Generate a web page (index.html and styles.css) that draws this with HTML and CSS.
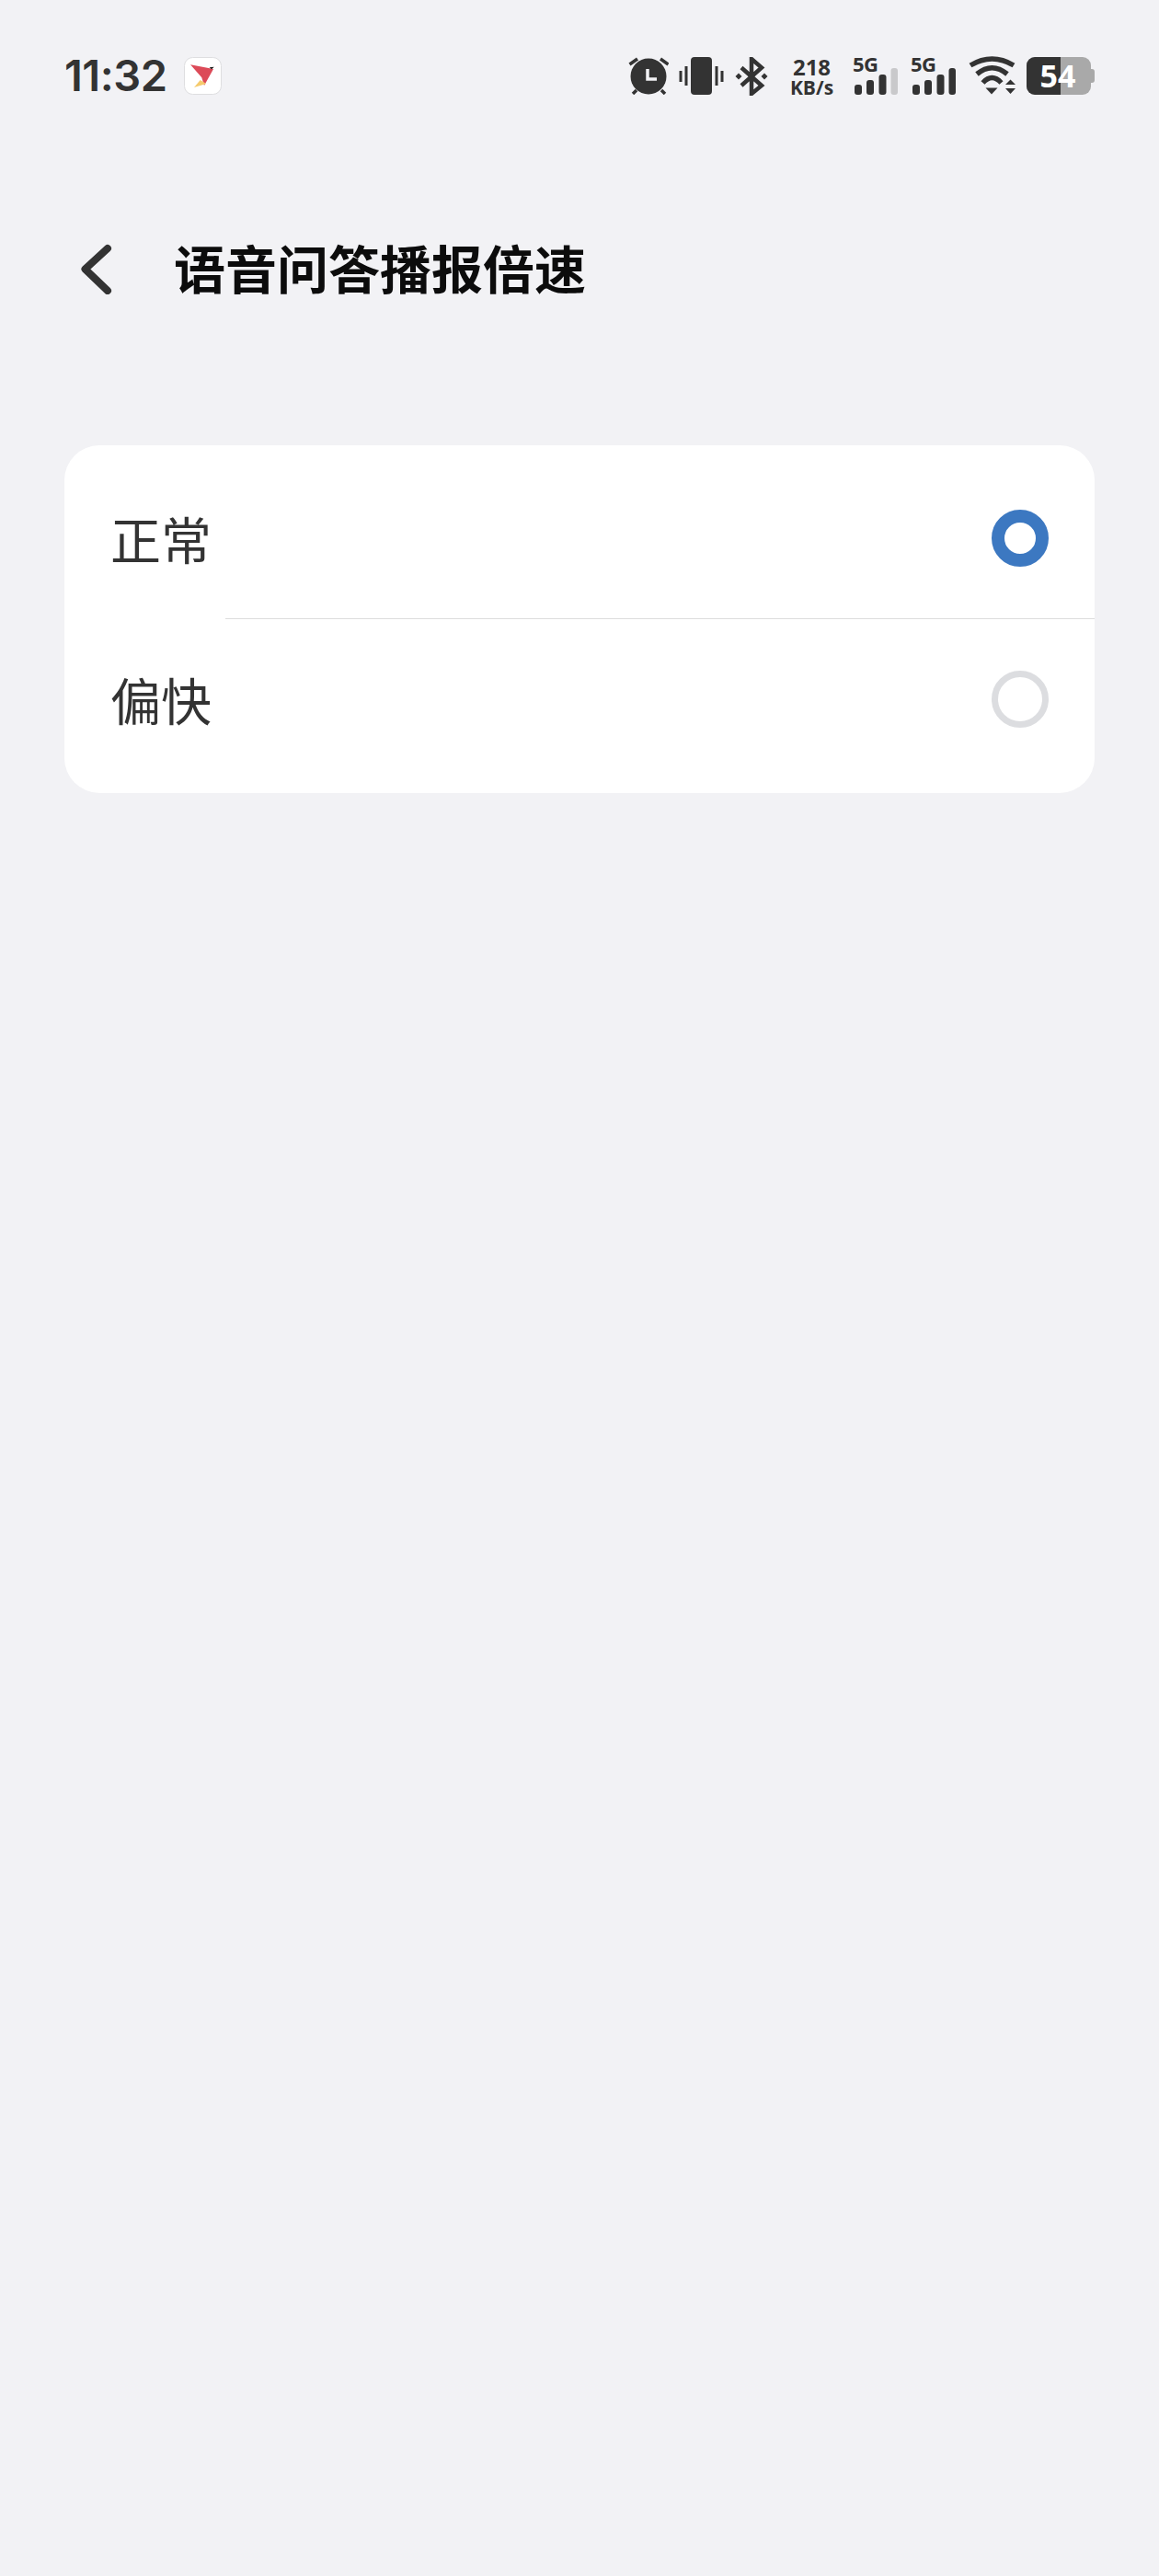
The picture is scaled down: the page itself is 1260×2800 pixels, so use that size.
FILE: index.html
```html
<!DOCTYPE html>
<html lang="zh-CN">
<head>
<meta charset="utf-8">
<title>语音问答播报倍速</title>
<link rel="stylesheet" href="styles.css">
</head>
<body>
<div class="page">
  <div class="status">
    <div class="status-left">
      <span class="time">11:32</span>
      <svg class="app-icon" viewBox="0 0 41 41">
        <rect x="0.500" y="0.500" width="40" height="40" rx="9" fill="#fff" stroke="#dedee0"/>
        <polygon points="7,8.300 32,13 22,31 19.300,22.300" fill="#dc4a58"/>
        <polygon points="11,33 17.700,25 24.300,29" fill="#f5cb6e"/>
        <polygon points="27.700,11.300 32.700,10.700 30,13.300" fill="#111"/>
      </svg>
    </div>
    <div class="status-right">
      <svg class="ic-alarm" viewBox="0 0 44 41">
        <circle cx="22" cy="21" r="19.500" fill="#333"/>
        <path d="M1.500 8 10 2M35 2l8.500 6M5 40l4-4M40 40l-4-4" stroke="#333" stroke-width="3.500" fill="none"/>
        <path d="M21 13v11h10" stroke="#f2f2f5" stroke-width="3.500" fill="none"/>
      </svg>
      <svg class="ic-vibrate" viewBox="0 0 49 41">
        <rect x="13" y="0" width="23" height="41" rx="4" fill="#333"/>
        <rect x="6.500" y="10" width="3" height="21" fill="#333"/>
        <rect x="0.500" y="15" width="3" height="12" fill="#333"/>
        <rect x="39.500" y="10" width="3" height="21" fill="#333"/>
        <rect x="45.500" y="15" width="3" height="12" fill="#333"/>
      </svg>
      <svg class="ic-bt" viewBox="0 0 36 42">
        <path d="M7 11.500 29 31 18 40V2l11 9.500L7 31" stroke="#333" stroke-width="4.500" fill="none"/>
        <polygon points="0.500,21 4,17.500 7.500,21 4,24.500" fill="#333"/>
        <polygon points="28.500,21 32,17.500 35.500,21 32,24.500" fill="#333"/>
      </svg>
      <div class="net">
        <span class="net-rate">218</span>
        <span class="net-unit">KB/s</span>
      </div>
      <div class="signal">
        <span class="sig-label">5G</span>
        <svg class="sig-bars" viewBox="0 0 49 42">
          <rect x="2" y="31" width="8" height="11" rx="3" fill="#333"/>
          <rect x="15" y="26" width="8" height="16" rx="3" fill="#333"/>
          <rect x="28.500" y="20" width="8" height="22" rx="3" fill="#333"/>
          <rect x="41.500" y="13" width="7.500" height="29" rx="3" fill="#c9c9cb"/>
        </svg>
      </div>
      <div class="signal">
        <span class="sig-label">5G</span>
        <svg class="sig-bars" viewBox="0 0 49 42">
          <rect x="2" y="31" width="8" height="11" rx="3" fill="#333"/>
          <rect x="15" y="26" width="8" height="16" rx="3" fill="#333"/>
          <rect x="28.500" y="20" width="8" height="22" rx="3" fill="#333"/>
          <rect x="41.500" y="13" width="7.500" height="29" rx="3" fill="#333"/>
        </svg>
      </div>
      <svg class="ic-wifi" viewBox="0 0 52 42">
        <path d="M2 10Q25.500-4 49 10M9 19.500Q25.500 6 42 19.500M15.500 29Q25.500 18 35.500 29" stroke="#333" stroke-width="5.500" fill="none"/>
        <polygon points="18.500,34.500 31.500,34.500 25,41.500" fill="#333"/>
        <polygon points="40,31 51,31 45.500,25.500" fill="#333"/>
        <polygon points="40,35 51,35 45.500,41" fill="#333"/>
      </svg>
      <div class="battery">
        <svg class="bat-shape" viewBox="0 0 74 41">
          <rect x="66" y="13" width="8" height="15" rx="3" fill="#a9a9a9"/>
          <rect x="0" y="0" width="70" height="41" rx="9" fill="#a9a9a9"/>
          <path d="M37 0H9a9 9 0 0 0-9 9v23a9 9 0 0 0 9 9h28z" fill="#333"/>
        </svg>
        <span class="bat-level">54</span>
      </div>
    </div>
  </div>

  <header class="header">
    <svg class="back" viewBox="0 0 37 56">
      <path d="M32 6 7.500 28.500 32 52" stroke="#333" stroke-width="8" stroke-linecap="round" stroke-linejoin="round" fill="none"/>
    </svg>
    <h1 class="title">语音问答播报倍速</h1>
  </header>

  <section class="card">
    <div class="row">
      <span class="label">正常</span>
      <span class="radio radio-on"></span>
    </div>
    <div class="divider"></div>
    <div class="row">
      <span class="label">偏快</span>
      <span class="radio"></span>
    </div>
  </section>
</div>
</body>
</html>
```

FILE: styles.css
```css
* { box-sizing: border-box; }
html, body { margin: 0; padding: 0; }
body {
  background: #f2f2f5;
  font-family: "Noto Sans CJK SC", "Noto Sans", sans-serif;
  color: #333;
}
.page {
  height: 2800px;
  padding: 61px 70px 0;
  overflow: hidden;
}
.status {
  display: flex;
  justify-content: space-between;
  align-items: flex-start;
  height: 42px;
}
.status-left {
  display: flex;
  align-items: center;
  height: 42px;
}
.time {
  font-family: Inter, "Noto Sans", sans-serif;
  font-size: 47px;
  font-weight: 600;
  letter-spacing: -0.5px;
  line-height: 42px;
  width: 130px;
  color: #333;
}
.app-icon { width: 41px; height: 41px; display: block; }
.status-right {
  display: flex;
  align-items: flex-start;
}
.status-right svg { display: block; }
.ic-alarm { width: 44px; height: 41px; margin: 1px 11px 0 0; }
.ic-vibrate { width: 49px; height: 41px; margin: 1px 12px 0 0; }
.ic-bt { width: 36px; height: 42px; margin: 1px 22px 0 0; }
.net {
  width: 51px;
  height: 40px;
  margin: 1px 19px 0 0;
  display: flex;
  flex-direction: column;
  align-items: center;
  font-family: "Open Sans", sans-serif;
  font-weight: 700;
  color: #333;
}
.net-rate { font-size: 24px; line-height: 22px; height: 22px; }
.net-unit { font-size: 21px; line-height: 18px; height: 18px; margin-top: 2px; white-space: nowrap; }
.signal {
  display: grid;
  width: 49px;
  height: 42px;
  margin-right: 14px;
}
.signal > * { grid-area: 1 / 1; }
.sig-label {
  font-family: "Open Sans", sans-serif;
  font-weight: 700;
  font-size: 22px;
  line-height: 17px;
  letter-spacing: -0.5px;
  color: #333;
  white-space: nowrap;
}
.sig-bars { width: 49px; height: 42px; }
.ic-wifi { width: 52px; height: 42px; margin-right: 11px; }
.battery {
  display: grid;
  width: 74px;
  height: 41px;
  margin-top: 1px;
}
.battery > * { grid-area: 1 / 1; }
.bat-shape { width: 74px; height: 41px; }
.bat-level {
  font-family: "Open Sans", sans-serif;
  font-weight: 700;
  font-size: 34px;
  line-height: 41px;
  width: 68px;
  text-align: center;
  color: #fff;
}
.header {
  display: flex;
  align-items: center;
  height: 56px;
  margin-top: 161px;
}
.back { width: 37px; height: 56px; margin-left: 15px; display: block; flex: none; }
.title {
  margin: 0 0 0 67px;
  padding-bottom: 5px;
  font-size: 56px;
  font-weight: 700;
  line-height: 56px;
  color: #0c0c0c;
  white-space: nowrap;
}
.card {
  margin-top: 164px;
  width: 1120px;
  padding: 14px 0 15px;
  background: #fff;
  border-radius: 38px;
}
.row {
  display: flex;
  align-items: center;
  justify-content: space-between;
  height: 174px;
  padding: 0 50px 0 50px;
}
.label {
  font-size: 55px;
  font-weight: 400;
  line-height: 60px;
  padding-bottom: 2px;
  box-sizing: content-box;
  color: #333;
}
.radio {
  width: 62px;
  height: 62px;
  border-radius: 50%;
  border: 7px solid #dcdde0;
  background: #fff;
}
.radio-on {
  border: 14px solid #3c78c1;
}
.divider {
  height: 1px;
  margin-left: 175px;
  background: #dcdcdc;
}
```
